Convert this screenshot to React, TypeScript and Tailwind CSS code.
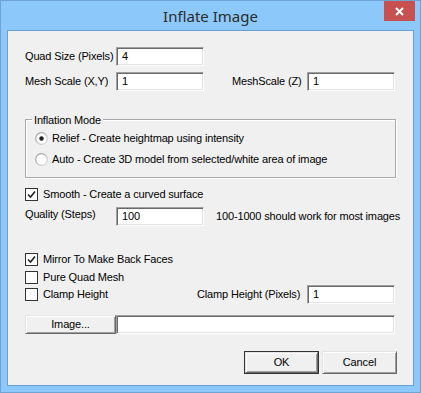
import React from "react";

const font = { fontFamily: '"Liberation Sans", Arial, sans-serif' };

const sunken =
  "bg-white border border-t-[#a0a0a0] border-l-[#a0a0a0] border-b-white border-r-white shadow-[inset_1px_1px_0_#696969,inset_-1px_-1px_0_#e3e3e3]";
const raised =
  "bg-[#f0f0f0] border border-t-[#e3e3e3] border-l-[#e3e3e3] border-b-[#696969] border-r-[#696969] shadow-[inset_1px_1px_0_#ffffff,inset_-1px_-1px_0_#a0a0a0]";

const TextBox: React.FC<{ value?: string; width: string }> = ({ value, width }) => (
  <div className={`${sunken} ${width} h-[19px] shrink-0 flex items-center pl-[5px] text-[11px] text-black`}>
    {value}
  </div>
);

const CheckBox: React.FC<{ checked?: boolean }> = ({ checked }) => (
  <div className="w-[13px] h-[13px] bg-white border border-[#333333] flex items-center justify-center shrink-0">
    {checked && (
      <svg width="9" height="9" viewBox="0 0 9 9">
        <path d="M1 4.5 L3.5 7 L8 1.5" fill="none" stroke="#222" strokeWidth="1.6" />
      </svg>
    )}
  </div>
);

const Radio: React.FC<{ checked?: boolean }> = ({ checked }) => (
  <svg width="13" height="13" viewBox="0 0 13 13" className="shrink-0">
    <defs>
      <linearGradient id="rg" x1="0" y1="0" x2="1" y2="1">
        <stop offset="0" stopColor="#9a9a9a" />
        <stop offset="1" stopColor="#e0e0e0" />
      </linearGradient>
    </defs>
    <circle cx="6.5" cy="6.5" r="5.8" fill="white" stroke="url(#rg)" strokeWidth="1.2" />
    {checked && <circle cx="6.5" cy="6.5" r="2.2" fill="#222" />}
  </svg>
);

export default function App() {
  return (
    <div
      className="w-[421px] h-[393px] bg-[#8cc8fa] border border-[#6fa3d3] flex flex-col"
      style={font}
    >
      <div className="relative h-[29px] flex items-center justify-center shrink-0">
        <span className="text-[15px] text-[#2b2b2b] mt-[2px]" style={{ fontFamily: '"Noto Sans", "Open Sans", sans-serif' }}>
          Inflate Image
        </span>
        <div className="absolute top-0 right-[5px] w-[31px] h-[20px] bg-[#c75050] flex items-center justify-center">
          <svg width="9" height="9" viewBox="0 0 9 9">
            <path d="M1 1 L8 8 M8 1 L1 8" stroke="white" strokeWidth="2" />
          </svg>
        </div>
      </div>

      <div className="mx-[6px] h-[356px] border border-[#6a9fd1] bg-[#f0f0f0] flex flex-col pl-[17px] text-[11px] text-black whitespace-nowrap tracking-[-0.15px]">
        <div className="mt-[16px] h-[19px] flex items-center">
          <span className="w-[91px] shrink-0">Quad Size (Pixels)</span>
          <TextBox value="4" width="w-[88px]" />
        </div>

        <div className="mt-[6px] h-[19px] flex items-center">
          <span className="w-[91px] shrink-0">Mesh Scale (X,Y)</span>
          <TextBox value="1" width="w-[88px]" />
          <span className="ml-[28px] w-[75px] shrink-0">MeshScale (Z)</span>
          <TextBox value="1" width="w-[88px]" />
        </div>

        <div className="relative mt-[28px] w-[371px] h-[59px] border border-[#a9a9a9] shadow-[1px_1px_0_#ffffff,inset_1px_1px_0_#ffffff] flex flex-col pl-[9px]">
          <span className="absolute -top-[8px] left-[6px] px-[2px] bg-[#f0f0f0]">Inflation Mode</span>
          <div className="mt-[11px] h-[15px] flex items-center gap-[4px]">
            <Radio checked />
            <span>Relief - Create heightmap using intensity</span>
          </div>
          <div className="mt-[6px] h-[15px] flex items-center gap-[4px]">
            <Radio />
            <span>Auto - Create 3D model from selected/white area of image</span>
          </div>
        </div>

        <div className="mt-[10px] h-[13px] flex items-center gap-[5px]">
          <CheckBox checked />
          <span>Smooth - Create a curved surface</span>
        </div>

        <div className="mt-[6px] h-[19px] flex items-center">
          <span className="w-[91px] shrink-0 -mt-[4px]">Quality (Steps)</span>
          <TextBox value="100" width="w-[88px]" />
          <span className="ml-[12px]">100-1000 should work for most images</span>
        </div>

        <div className="mt-[27px] h-[13px] flex items-center gap-[5px]">
          <CheckBox checked />
          <span>Mirror To Make Back Faces</span>
        </div>

        <div className="mt-[5px] h-[13px] flex items-center gap-[5px]">
          <CheckBox />
          <span>Pure Quad Mesh</span>
        </div>

        <div className="mt-[1px] h-[19px] flex items-center">
          <CheckBox />
          <span className="ml-[5px] w-[154px] shrink-0">Clamp Height</span>
          <span className="w-[110px] shrink-0">Clamp Height (Pixels)</span>
          <TextBox value="1" width="w-[88px]" />
        </div>

        <div className="mt-[11px] h-[19px] flex items-center">
          <button className={`${raised} w-[91px] h-[19px] shrink-0 text-[11px] text-black`}>Image...</button>
          <TextBox width="w-[279px]" />
        </div>

        <div className="mt-[17px] flex justify-end gap-[3px] pr-[16px]">
          <button className="w-[75px] h-[23px] border border-[#333333] p-0">
            <div className={`${raised} w-full h-full flex items-center justify-center text-[11px] text-black`}>OK</div>
          </button>
          <button className={`${raised} w-[75px] h-[23px] text-[11px] text-black`}>Cancel</button>
        </div>
      </div>
    </div>
  );
}
